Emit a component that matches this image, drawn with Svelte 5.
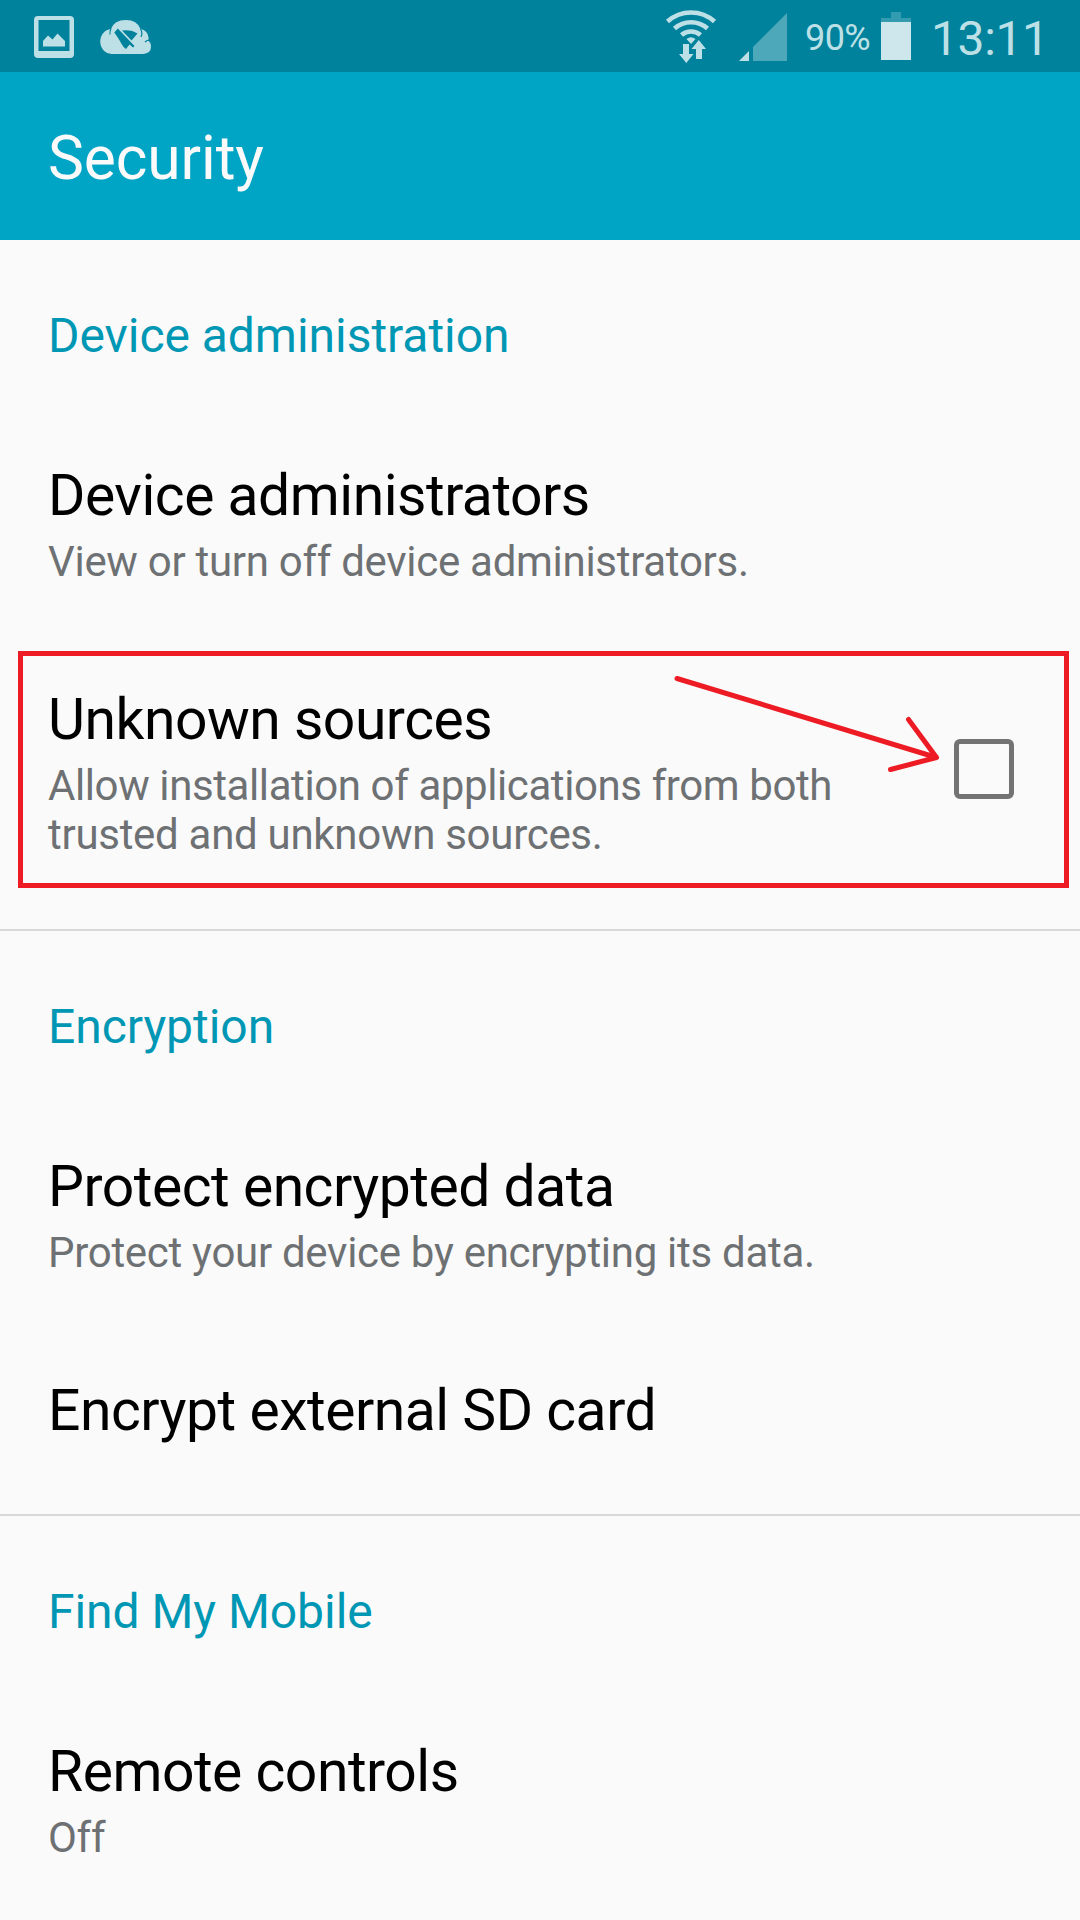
<script>
  const sections = [
    { title: 'Device administration', items: [
      { title: 'Device administrators', lines: ['View or turn off device administrators.'] },
      { title: 'Unknown sources', lines: ['Allow installation of applications from both', 'trusted and unknown sources.'], checkbox: true }
    ] },
    { title: 'Encryption', items: [
      { title: 'Protect encrypted data', lines: ['Protect your device by encrypting its data.'] },
      { title: 'Encrypt external SD card', lines: [] }
    ] },
    { title: 'Find My Mobile', items: [
      { title: 'Remote controls', lines: ['Off'] }
    ] }
  ];
</script>

<div class="screen">
  <div class="status">
    <!-- Screenshot saved, cloud sync off -->
    <svg width="160" height="72" viewBox="0 0 160 72" fill="#bde0e7">
      <path fill-rule="evenodd" d="M38 16h32a4 4 0 0 1 4 4v34a4 4 0 0 1-4 4H38a4 4 0 0 1-4-4V20a4 4 0 0 1 4-4zm0.500 4v31h31V20z"/>
      <path d="M43 46.500v-5.500l5-5.500 4.500 4 5-6 7.500 7.500v5.500z"/>
      <path d="M112.500 54a11.500 12.500 0 0 1-1.500-25Q114 20 126 20q11 0 14.500 9 7 1 8 8.500a3 3 0 0 1-0.500 3 7 7 0 0 1 3 6q0 7-8 7.500z"/>
      <path d="M111 28.500q-1.500 3-1 6M140.500 29q2.500 4 0.500 8M149.500 40q-2.500 0-4.500 2" fill="none" stroke="#00829c" stroke-width="1.200"/>
      <path d="M114.300 32.500l3.500-4 16.700 17.500-1.500 1.500-3.500-3-3.500 4.500q-3-2-5-6t-6.700-10.500zM122 30.500q9-1.500 15.500 3l-6 7z" fill="#00829c"/>
    </svg>
    <!-- Wi-Fi with traffic arrows, cellular signal -->
    <svg class="radio" width="130" height="72" viewBox="0 0 130 72">
      <g fill="none" stroke="#bde0e7" stroke-width="4.600"><path d="M7.500 21.500a35 35 0 0 1 47 0M14.500 28.500a25 25 0 0 1 33 0M21.500 35a14.500 14.500 0 0 1 19 0"/></g>
      <path d="M26.500 39q4.500-3.500 9 0l-4.500 5zM23 44h6v10h4.500L26.300 63 19 54h4zM36 59V49h-4.500l7.300-9 7.200 9h-4v10z" fill="#bde0e7"/>
      <path d="M79 61l10-10v10z" fill="#bde0e7"/>
      <path d="M127 13v48H93V47z" fill="#4da8ba"/>
    </svg>
    <span class="pct">90%</span>
    <svg class="battery" width="30" height="48" viewBox="0 0 30 48"><path d="M10 0h10v6h10v4H0V6h10z" fill="#339bb0"/><path d="M0 10h30v38H0z" fill="#cde7ec"/></svg>
    <span class="clock">13:11</span>
  </div>
  <header>Security</header>
  <main>
    {#each sections as s}
      <section>
        <h2>{s.title}</h2>
        {#each s.items as item}
          <div class="item" class:single={!item.lines.length}>
            <div class="text">
              <h3>{item.title}</h3>
              {#each item.lines as l}<p class:long={l.length > 43}>{l}</p>{/each}
            </div>
            {#if item.checkbox}
              <i class="box"></i>
              <svg class="callout" width="1051" height="237" viewBox="18 651 1051 237" fill="none" stroke="#ed1c24" stroke-width="5">
                <path d="M20.500 653.500h1046v232h-1046z"/>
                <path d="M677 678.500l259.500 79M908.500 719.500l28 38M890.500 769.500l46-12" stroke-linecap="round"/>
              </svg>
            {/if}
          </div>
        {/each}
      </section>
    {/each}
  </main>
</div>

<style>
  .screen { width: 1080px; height: 1920px; overflow: hidden; background: #fafafa; font-family: Roboto, sans-serif; }
  .status { height: 72px; background: #00829c; display: flex; align-items: center; color: #bde0e7; font-weight: 400; }
  .radio { margin-left: 500px; }
  .pct { font-size: 36px; margin-left: 15px; padding-top: 4px; width: 66px; letter-spacing: -0.600px; }
  .battery { margin-left: 10px; }
  .clock { font-size: 48px; margin-left: 20px; padding-top: 4px; letter-spacing: -0.400px; }
  header { height: 168px; background: #00a5c6; color: #fafafa; font-size: 60.500px; line-height: 174px; padding-left: 48px; box-sizing: border-box; letter-spacing: -0.100px; }
  section { border-bottom: 2px solid #d8d8d8; }
  h2 { margin: 0; padding: 0 48px; height: 192px; line-height: 192px; font-size: 48px; font-weight: 400; color: #0097b5; letter-spacing: -0.040px; }
  .item { position: relative; padding: 28px 66px 70px 48px; display: flex; justify-content: space-between; align-items: center; }
  .item.single { padding-bottom: 67px; }
  h3 { margin: 0; font-size: 57px; line-height: 72px; font-weight: 400; color: #000; letter-spacing: -0.480px; white-space: nowrap; }
  p { margin: 0; font-size: 42px; line-height: 49px; color: #6e7173; white-space: nowrap; letter-spacing: -0.290px; }
  p.long { letter-spacing: -0.400px; }
  h3 + p { margin-top: 5px; }
  .box { width: 60px; height: 60px; border: 5px solid #737373; border-radius: 6px; box-sizing: border-box; margin-bottom: 5px; }
  .callout { position: absolute; left: 18px; top: -5px; }
</style>
